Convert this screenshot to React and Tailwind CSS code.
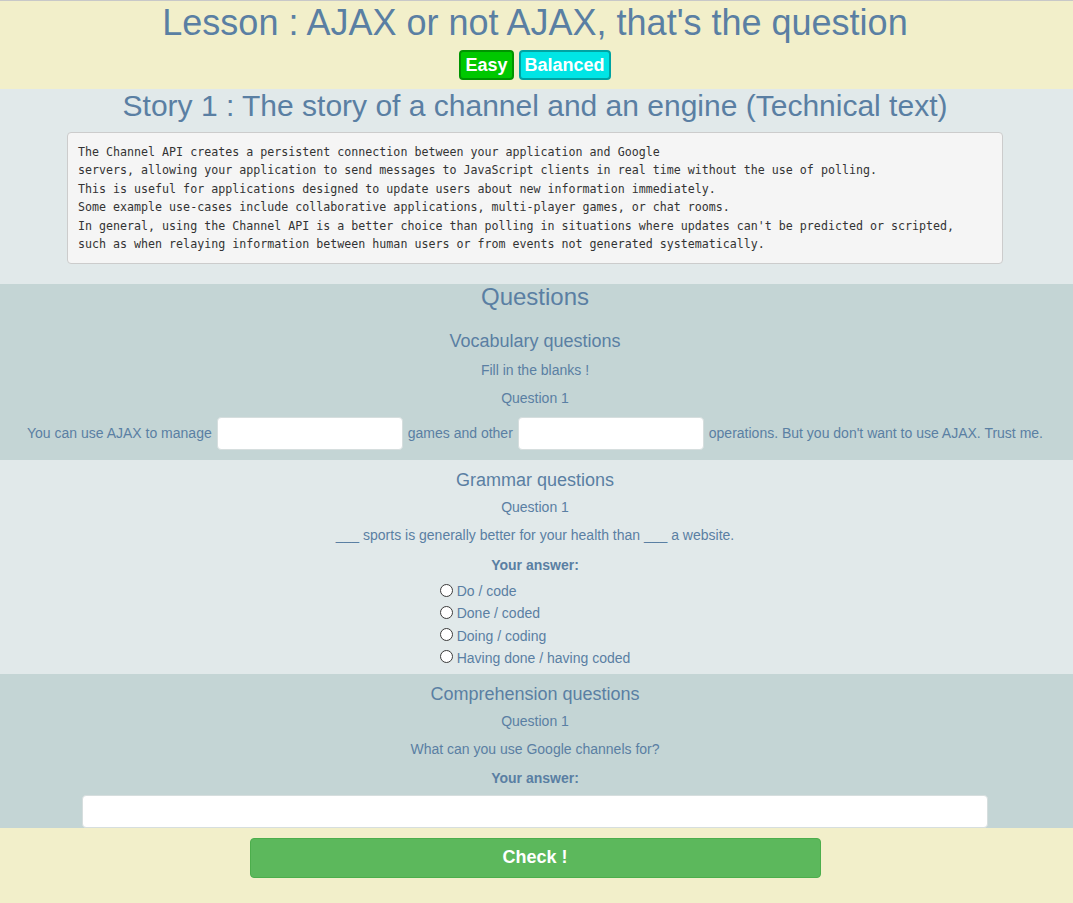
import React from 'react';

const story = [
    'The Channel API creates a persistent connection between your application and Google',
    'servers, allowing your application to send messages to JavaScript clients in real time without the use of polling.',
    'This is useful for applications designed to update users about new information immediately.',
    'Some example use-cases include collaborative applications, multi-player games, or chat rooms.',
    "In general, using the Channel API is a better choice than polling in situations where updates can't be predicted or scripted,",
    'such as when relaying information between human users or from events not generated systematically.',
];

const choices = ['Do / code', 'Done / coded', 'Doing / coding', 'Having done / having coded'];

const Blank = ({ className }) => (
    <input type="text" className={`h-[33px] rounded-[4px] border border-[#d6dede] bg-white outline-none ${className}`} />
);

const App = () => {
    return (
        <div className="font-['Liberation_Sans',Arial,sans-serif] text-[#5a7fa3] border-t border-[#c8c8c8] text-center">
            <div className="bg-[#f2efca] pt-[2px] pb-[9px] pr-[3px]">
                <h1 className="text-[36px] leading-[40px]">Lesson : AJAX or not AJAX, that's the question</h1>
                <div className="flex justify-center gap-[5px] mt-[7px]">
                    <span className="h-[30px] px-[4px] flex items-center rounded-[4px] border-2 border-[#009400] bg-[#00c800] text-white font-bold text-[18px]">Easy</span>
                    <span className="h-[30px] px-[4px] flex items-center rounded-[4px] border-2 border-[#00a3a3] bg-[#00e5e5] text-white font-bold text-[18px]">Balanced</span>
                </div>
            </div>

            {/* story */}
            <div className="bg-[#e1e9ea] pb-[20px] pr-[3px]">
                <h2 className="text-[30px] leading-[33px]">Story 1 : The story of a channel and an engine (Technical text)</h2>
                <pre className="mt-[10px] mx-auto w-[936px] text-left bg-[#f5f5f5] border border-[#cccccc] rounded-[4px] px-[10px] py-[9.5px] font-['DejaVu_Sans_Mono',monospace] text-[11.65px] leading-[18.57px] text-[#333333]">
                    {story.join('\n')}
                </pre>
            </div>

            <div className="bg-[#c4d5d5] pb-[10px] pr-[3px]">
                <h3 className="text-[24px] leading-[26px]">Questions</h3>
                <h4 className="text-[18px] leading-[20px] mt-[21px]">Vocabulary questions</h4>
                <p className="text-[14px] leading-[16px] mt-[11px]">Fill in the blanks !</p>
                <p className="text-[14px] leading-[16px] mt-[12px]">Question 1</p>
                <div className="flex justify-center items-center gap-[5px] mt-[10px] text-[14px] h-[34px]">
                    <span>You can use AJAX to manage</span>
                    <Blank className="w-[186px]" />
                    <span>games and other</span>
                    <Blank className="w-[186px]" />
                    <span>operations. But you don't want to use AJAX. Trust me.</span>
                </div>
            </div>

            <div className="bg-[#e1e9ea] pt-[10px] pb-[4px] pr-[3px]">
                <h4 className="text-[18px] leading-[20px]">Grammar questions</h4>
                <p className="text-[14px] leading-[16px] mt-[9px]">Question 1</p>
                <p className="text-[14px] leading-[16px] mt-[12px]">___ sports is generally better for your health than ___ a website.</p>
                <p className="text-[14px] leading-[16px] mt-[14px] font-bold">Your answer:</p>
                <div className="mt-[7px] flex justify-center">
                    <div className="text-left text-[14px]">
                        {choices.map(c => (
                            <label key={c} className="flex items-center h-[22.3px]">
                                <input type="radio" name="grammar" className="appearance-none w-[13px] h-[13px] rounded-full border border-[#3a3a3a] bg-white mr-[4px] mb-[3px]" />
                                <span>{c}</span>
                            </label>
                        ))}
                    </div>
                </div>
            </div>

            <div className="bg-[#c4d5d5] pt-[10px] pr-[3px]">
                <h4 className="text-[18px] leading-[20px]">Comprehension questions</h4>
                <p className="text-[14px] leading-[16px] mt-[9px]">Question 1</p>
                <p className="text-[14px] leading-[16px] mt-[12px]">What can you use Google channels for?</p>
                <p className="text-[14px] leading-[16px] mt-[13px] font-bold">Your answer:</p>
                <div className="mt-[9px] flex justify-center">
                    <Blank className="w-[906px] block" />
                </div>
            </div>

            <div className="bg-[#f2efca] pt-[10px] pb-[26px] pr-[3px] flex justify-center">
                <button className="w-[571px] h-[40px] rounded-[4px] border border-[#4cae4c] bg-[#5cb85c] text-white font-bold text-[18px]">Check !</button>
            </div>
        </div>
    );
};

export default App;
